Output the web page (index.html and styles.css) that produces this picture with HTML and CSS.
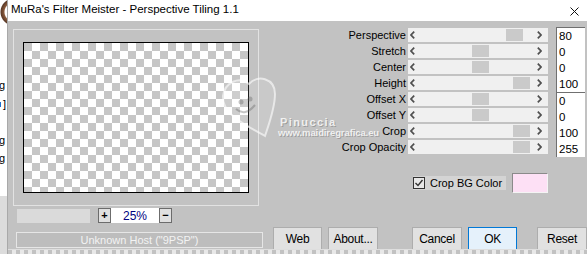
FILE: index.html
```html
<!DOCTYPE html>
<html lang="en">
<head>
<meta charset="UTF-8" />
<title>MuRa's Filter Meister - Perspective Tiling 1.1</title>
<link rel="stylesheet" href="styles.css">
</head>
<body>
<div class="screen">
  <!-- window behind the dialog -->
  <div class="behind">
    <div class="behind-pic"></div>
    <div class="frag frag1">g</div>
    <div class="frag frag2"><span class="tick"></span>]</div>
    <div class="frag frag3">g</div>
    <div class="frag frag4">g</div>
  </div>

  <div class="dialog">
    <div class="titlebar">
      <span class="title">MuRa's Filter Meister - Perspective Tiling 1.1</span>
      <svg class="close" viewBox="0 0 9 9" aria-hidden="true"><path d="M0.5 0.5 L8.5 8.5 M8.5 0.5 L0.5 8.5" /></svg>
    </div>

    <div class="client">
      <div class="left">
        <div class="panel">
          <div class="preview"></div>
        </div>
        <div class="zoomrow">
          <div class="zoombar"></div>
          <div class="zoomctl">
            <span class="zbtn">+</span>
            <span class="zval">25%</span>
            <span class="zbtn">&minus;</span>
          </div>
        </div>
        <div class="status">Unknown Host ("9PSP")</div>
      </div>

      <div class="right">
        <div class="params">
          <div class="controls">
            <div class="row"><span class="label">Perspective</span><div class="track"><svg class="arr" viewBox="0 0 5 8"><polyline points="4.2,0.6 1,4 4.2,7.4" /></svg><span class="thumb" style="left:98px"></span><svg class="arr" viewBox="0 0 5 8"><polyline points="0.8,0.6 4,4 0.8,7.4" /></svg></div></div>
            <div class="row"><span class="label">Stretch</span><div class="track"><svg class="arr" viewBox="0 0 5 8"><polyline points="4.2,0.6 1,4 4.2,7.4" /></svg><span class="thumb" style="left:64px"></span><svg class="arr" viewBox="0 0 5 8"><polyline points="0.8,0.6 4,4 0.8,7.4" /></svg></div></div>
            <div class="row"><span class="label">Center</span><div class="track"><svg class="arr" viewBox="0 0 5 8"><polyline points="4.2,0.6 1,4 4.2,7.4" /></svg><span class="thumb" style="left:64px"></span><svg class="arr" viewBox="0 0 5 8"><polyline points="0.8,0.6 4,4 0.8,7.4" /></svg></div></div>
            <div class="row"><span class="label">Height</span><div class="track"><svg class="arr" viewBox="0 0 5 8"><polyline points="4.2,0.6 1,4 4.2,7.4" /></svg><span class="thumb" style="left:105px"></span><svg class="arr" viewBox="0 0 5 8"><polyline points="0.8,0.6 4,4 0.8,7.4" /></svg></div></div>
            <div class="row"><span class="label">Offset X</span><div class="track"><svg class="arr" viewBox="0 0 5 8"><polyline points="4.2,0.6 1,4 4.2,7.4" /></svg><span class="thumb" style="left:64px"></span><svg class="arr" viewBox="0 0 5 8"><polyline points="0.8,0.6 4,4 0.8,7.4" /></svg></div></div>
            <div class="row"><span class="label">Offset Y</span><div class="track"><svg class="arr" viewBox="0 0 5 8"><polyline points="4.2,0.6 1,4 4.2,7.4" /></svg><span class="thumb" style="left:64px"></span><svg class="arr" viewBox="0 0 5 8"><polyline points="0.8,0.6 4,4 0.8,7.4" /></svg></div></div>
            <div class="row"><span class="label">Crop</span><div class="track"><svg class="arr" viewBox="0 0 5 8"><polyline points="4.2,0.6 1,4 4.2,7.4" /></svg><span class="thumb" style="left:105px"></span><svg class="arr" viewBox="0 0 5 8"><polyline points="0.8,0.6 4,4 0.8,7.4" /></svg></div></div>
            <div class="row"><span class="label">Crop Opacity</span><div class="track"><svg class="arr" viewBox="0 0 5 8"><polyline points="4.2,0.6 1,4 4.2,7.4" /></svg><span class="thumb" style="left:105px"></span><svg class="arr" viewBox="0 0 5 8"><polyline points="0.8,0.6 4,4 0.8,7.4" /></svg></div></div>
          </div>
          <div class="values">
            <div class="vgroup">
              <div class="val">80</div>
              <div class="val">0</div>
              <div class="val">0</div>
              <div class="val">100</div>
            </div>
            <div class="vgroup">
              <div class="val">0</div>
              <div class="val">0</div>
              <div class="val">100</div>
              <div class="val">255</div>
            </div>
          </div>
        </div>

        <div class="bgrow">
          <label class="cblabel"><span class="cbox"><svg viewBox="0 0 10 10"><polyline points="1.5,5 4,7.5 8.5,2" /></svg></span>Crop BG Color</label>
          <div class="swatch"></div>
        </div>

        <div class="buttons">
          <button class="btn btn-web">Web</button>
          <button class="btn btn-about">About...</button>
          <button class="btn btn-cancel">Cancel</button>
          <button class="btn btn-ok">OK</button>
          <button class="btn btn-reset">Reset</button>
        </div>
      </div>
    </div>
    <div class="desk"></div>

    <!-- watermark over the screenshot -->
    <div class="watermark">
      <svg class="wm-pin" viewBox="0 0 60 66" aria-hidden="true">
        <path class="wm-shape" d="M48 62 C30 52 4 40 6 22 C8 8 22 2 32 10 C40 0 58 4 58 20 C58 34 52 50 48 62 Z" />
        <circle class="wm-eye" cx="24" cy="28" r="2.5" />
        <circle class="wm-eye" cx="33" cy="25" r="2.5" />
        <path class="wm-smile" d="M19 35 Q28 43 38 31" />
      </svg>
      <div class="wm-name">Pinuccia</div>
      <div class="wm-url">www.maidiregrafica.eu</div>
    </div>
  </div>
</div>
</body>
</html>
```

FILE: styles.css
```css
body {
  margin: 0;
  width: 587px;
  height: 254px;
  overflow: hidden;
  background: #c2c2c2;
  font-family: "Liberation Sans", Arial, sans-serif;
  color: #000;
}
.screen {
  display: flex;
  height: 254px;
}

/* Window behind the dialog */
.behind {
  width: 7px;
  border-right: 1px solid #a9a9a9;
  background: linear-gradient(#fff 0 196px, #dcdcdc 196px);
  overflow: hidden;
  display: flex;
  flex-direction: column;
  font-size: 11px;
}
.behind-pic {
  width: 7px;
  height: 28px;
  background: radial-gradient(circle at 14px 12px, #fff 0 9px, #8a5a3c 10px, #5b3a28 13px, #fff 14px);
}
.frag {
  height: 13px;
  line-height: 13px;
  margin-left: -1px;
}
.frag1 { margin-top: 51px; }
.frag2 { margin-top: 6px; display: flex; align-items: center; }
.frag3 { margin-top: 23px; }
.frag4 { margin-top: 5px; }
.tick {
  width: 2px;
  height: 5px;
  background: #1e6fd0;
  margin-right: 2px;
}

/* Dialog */
.dialog {
  flex: 1;
  display: flex;
  flex-direction: column;
  position: relative;
}
.titlebar {
  height: 22px;
  background: #fff;
  display: flex;
  align-items: center;
  padding-left: 3px;
}
.title {
  flex: 1;
  font-size: 11.5px;
  margin-top: -3px;
}
.close {
  width: 9px;
  height: 9px;
  margin-right: 8px;
  margin-top: 1px;
  fill: none;
  stroke: #111;
  stroke-width: 1;
}
.client {
  height: 228px;
  display: flex;
  font-size: 11px;
}

/* Left column: preview */
.left {
  width: 265px;
  box-sizing: border-box;
  padding: 8px 0 0 5px;
}
.panel {
  width: 246px;
  height: 177px;
  box-sizing: border-box;
  border: 1px solid #e2e2e2;
  padding: 12px 0 0 9px;
}
.preview {
  width: 226px;
  height: 151px;
  box-sizing: border-box;
  border: 1px solid #000;
  background: repeating-conic-gradient(#fff 0 25%, #c6c6c6 0 50%) 0 0 / 16px 16px;
}
.zoomrow {
  display: flex;
  margin-top: 2px;
  height: 15px;
  padding-left: 4px;
}
.zoombar {
  width: 73px;
  height: 14px;
  margin-top: 1px;
  margin-right: 8px;
  background: #dadada;
}
.zoomctl {
  width: 74px;
  height: 15px;
  background: #fff;
  display: flex;
  align-items: center;
  justify-content: space-between;
}
.zbtn {
  width: 11px;
  height: 13px;
  border: 1px solid #6c6c6c;
  background: #e0e0e0;
  font-weight: bold;
  line-height: 13px;
  text-align: center;
}
.zval {
  font-size: 12px;
  color: #000080;
}
.status {
  margin: 9px 0 0 3px;
  width: 247px;
  height: 16px;
  box-sizing: border-box;
  border: 1px solid #e6e6e6;
  background: #bdbdbd;
  color: #f3f3f3;
  line-height: 14px;
  text-align: center;
}

/* Right column: parameters */
.right {
  flex: 1;
  padding-top: 6px;
}
.params {
  display: flex;
}
.controls {
  width: 275px;
}
.row {
  display: flex;
  align-items: center;
  height: 16px;
}
.label {
  width: 135px;
  box-sizing: border-box;
  padding-right: 2px;
  text-align: right;
}
.track {
  position: relative;
  width: 140px;
  height: 14px;
  box-sizing: border-box;
  padding: 0 6px 0 2px;
  background: #f0f0f0;
  display: flex;
  align-items: center;
  justify-content: space-between;
}
.arr {
  width: 5px;
  height: 8px;
  fill: none;
  stroke: #505050;
  stroke-width: 1.7;
}
.thumb {
  position: absolute;
  top: 1px;
  width: 17px;
  height: 12px;
  background: #cacaca;
}
.values {
  margin-left: 8px;
  width: 29px;
  display: flex;
  flex-direction: column;
}
.vgroup {
  background: #fff;
  border-left: 1px solid #707070;
  border-top: 1px solid #707070;
}
.val {
  height: 16px;
  line-height: 16px;
  padding-left: 2px;
  font-size: 11.5px;
}

/* Crop BG color */
.bgrow {
  display: flex;
  align-items: center;
  height: 20px;
  margin-top: 16px;
  padding-left: 140px;
}
.cblabel {
  display: flex;
  align-items: center;
  width: 93px;
  height: 14px;
  background: #d4d4d4;
  white-space: nowrap;
}
.cbox {
  width: 12px;
  height: 12px;
  box-sizing: border-box;
  border: 1px solid #333;
  background: #e8e8e8;
  margin-right: 5px;
  display: flex;
}
.cbox svg {
  width: 10px;
  height: 10px;
  fill: none;
  stroke: #333;
  stroke-width: 1.4;
}
.swatch {
  width: 36px;
  height: 20px;
  box-sizing: border-box;
  margin-left: 6px;
  border-top: 1px solid #8a8a8a;
  border-left: 1px solid #8a8a8a;
  border-right: 1px solid #f4f4f4;
  border-bottom: 1px solid #f4f4f4;
  background: #fde0f5;
}

/* Buttons */
.buttons {
  display: flex;
  margin-top: 34px;
}
.btn {
  height: 23px;
  width: 50px;
  padding: 0;
  border: 1px solid #adadad;
  background: #e1e1e1;
  color: #000;
  font-family: "Liberation Sans", Arial, sans-serif;
  font-size: 12px;
  letter-spacing: -0.3px;
}
.btn-web { width: 49px; }
.btn-about { margin-left: 6px; }
.btn-cancel { margin-left: 34px; }
.btn-ok {
  width: 49px;
  margin-left: 6px;
  border-color: #0078d7;
  background: #e5f1fb;
}
.btn-reset { margin-left: 20px; }

.desk {
  height: 4px;
  border-top: 1px solid #dedede;
  background: repeating-linear-gradient(90deg, #c2c2c2 0 4px, #e8e8e8 4px 8px);
}

/* Watermark */
.watermark {
  position: absolute;
  left: 204px;
  top: 72px;
  width: 176px;
  height: 70px;
}
.wm-pin {
  position: absolute;
  left: 4px;
  top: 2px;
  width: 62px;
  height: 66px;
}
.wm-shape {
  fill: rgba(255, 255, 255, 0.12);
  stroke: rgba(255, 255, 255, 0.6);
  stroke-width: 2;
}
.wm-eye { fill: rgba(90, 90, 90, 0.35); }
.wm-smile {
  fill: none;
  stroke: rgba(90, 90, 90, 0.35);
  stroke-width: 2;
}
.wm-name,
.wm-url {
  position: absolute;
  font-family: "Liberation Sans", sans-serif;
  font-weight: bold;
  line-height: 10px;
  color: rgba(255, 255, 255, 0.8);
  text-shadow: 1px 1px 0 rgba(0, 0, 0, 0.2);
  white-space: nowrap;
}
.wm-name {
  left: 68px;
  top: 45px;
  font-size: 11px;
  letter-spacing: 1.4px;
}
.wm-url {
  left: 66px;
  top: 56px;
  font-size: 9.5px;
  letter-spacing: -0.1px;
}
```
